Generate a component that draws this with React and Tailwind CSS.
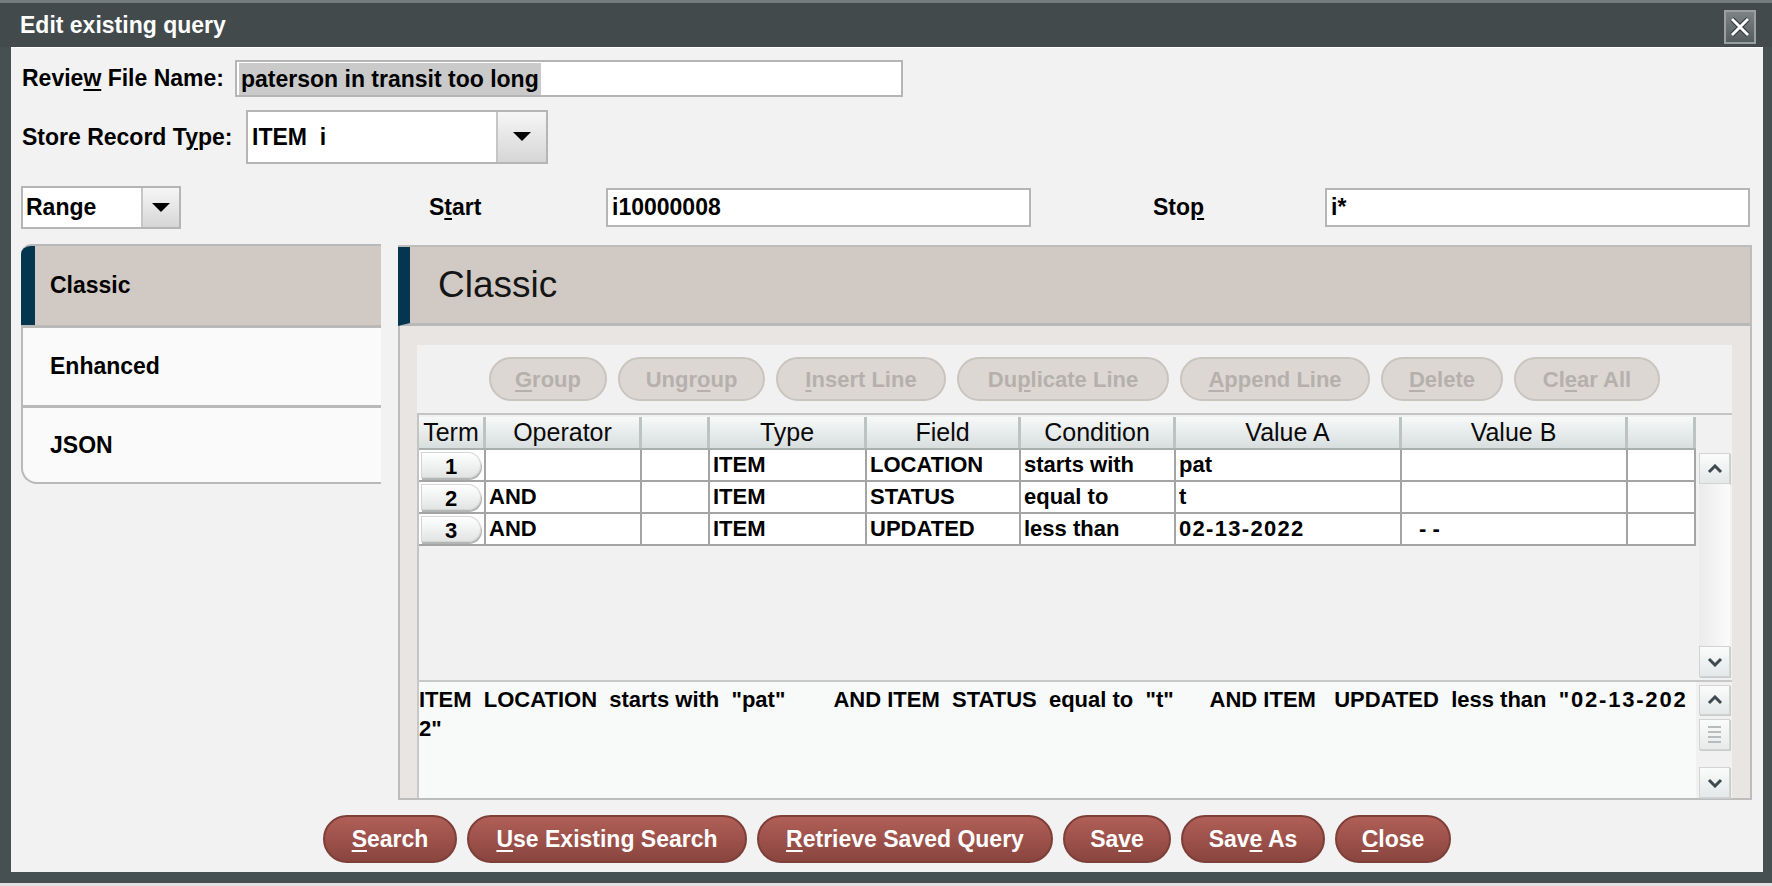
import React from "react";

const U = ({ children }) => (
  <span className="underline decoration-2 underline-offset-[3px]">{children}</span>
);

const Arrow = () => (
  <svg width="18" height="10" viewBox="0 0 18 10">
    <path d="M0 0 L18 0 L9 9 Z" fill="#000" />
  </svg>
);

const Chevron = ({ up }) => (
  <svg width="16" height="10" viewBox="0 0 16 10">
    <path
      d={up ? "M2 8 L8 2 L14 8" : "M2 2 L8 8 L14 2"}
      fill="none"
      stroke="#3e4a4f"
      strokeWidth="3"
    />
  </svg>
);

const ScrollBtn = ({ up, h = "h-[31px]" }) => (
  <div
    className={`w-[31px] ${h} border border-[#d2d4d4] bg-gradient-to-b from-[#fbfbfb] to-[#e4e8e9] flex items-center justify-center shadow-[1px_1px_0_#c8cbcc]`}
  >
    <Chevron up={up} />
  </div>
);

const cols = [
  { w: "w-[67px]", label: "Term" },
  { w: "w-[156px]", label: "Operator" },
  { w: "w-[68px]", label: "" },
  { w: "w-[157px]", label: "Type" },
  { w: "w-[154px]", label: "Field" },
  { w: "w-[155px]", label: "Condition" },
  { w: "w-[226px]", label: "Value A" },
  { w: "w-[226px]", label: "Value B" },
  { w: "w-[68px]", label: "" },
];

const rows = [
  ["1", "", "", "ITEM", "LOCATION", "starts with", "pat", "", ""],
  ["2", "AND", "", "ITEM", "STATUS", "equal to", "t", "", ""],
  ["3", "AND", "", "ITEM", "UPDATED", "less than", "02-13-2022", "- -", ""],
];

const toolbar = [
  { w: "w-[118px]", t: <span><U>G</U>roup</span> },
  { w: "w-[147px]", t: <span>Ungr<U>o</U>up</span> },
  { w: "w-[170px]", t: <span><U>I</U>nsert Line</span> },
  { w: "w-[212px]", t: <span>Du<U>p</U>licate Line</span> },
  { w: "w-[190px]", t: <span><U>A</U>ppend Line</span> },
  { w: "w-[122px]", t: <span><U>D</U>elete</span> },
  { w: "w-[146px]", t: <span>Cl<U>e</U>ar All</span> },
];

const bottomBtns = [
  { w: "w-[134px]", t: <span><U>S</U>earch</span> },
  { w: "w-[280px]", t: <span><U>U</U>se Existing Search</span> },
  { w: "w-[296px]", t: <span><U>R</U>etrieve Saved Query</span> },
  { w: "w-[108px]", t: <span>Sa<U>v</U>e</span> },
  { w: "w-[144px]", t: <span>Sav<U>e</U> As</span> },
  { w: "w-[116px]", t: <span><U>C</U>lose</span> },
];

const queryLine1 =
  'ITEM  LOCATION  starts with  "pat"        AND ITEM  STATUS  equal to  "t"      AND ITEM   UPDATED  less than  ';

export default function App() {
  return (
    <div className="w-[1772px] h-[886px] bg-[#e2e2e2] overflow-hidden font-['Liberation_Sans',Arial,sans-serif] text-black">
      <div className="h-[883px] bg-[#465052] flex flex-col">
        {/* Title bar */}
        <div className="h-[47px] shrink-0 flex items-center justify-between pl-[20px] pr-[16px] border-t-[3px] border-[#737b7d] bg-[#424a4c]">
          <span className="text-white font-bold text-[23px] leading-none">Edit existing query</span>
          <div className="w-[32px] h-[34px] mt-[3px] border-2 border-[#9aa0a1] bg-gradient-to-b from-[#7c8385] to-[#555d5f] flex items-center justify-center">
            <svg width="22" height="22" viewBox="0 0 22 22">
              <path d="M3 3 L19 19 M19 3 L3 19" stroke="#2e3436" strokeWidth="5" />
              <path d="M3 3 L19 19 M19 3 L3 19" stroke="#fff" strokeWidth="3" />
            </svg>
          </div>
        </div>

        {/* Content */}
        <div className="flex-1 ml-[11px] mr-[9px] mb-[11px] bg-[#f2f2f2] border-t border-white flex flex-col pl-[11px] pr-[11px]">
          {/* Row 1 */}
          <div className="mt-[12px] h-[37px] flex items-center">
            <div className="w-[213px] font-bold text-[23px]">
              Revie<U>w</U> File Name:
            </div>
            <div className="w-[668px] h-[37px] border-2 border-[#b5b5b5] bg-white flex items-center pl-[2px]">
              <span className="h-[32px] leading-[32px] bg-[#cacaca] font-bold text-[23px] px-[2px]">
                paterson in transit too long
              </span>
            </div>
          </div>

          {/* Row 2 */}
          <div className="mt-[13px] h-[54px] flex items-center">
            <div className="w-[224px] font-bold text-[23px]">
              Store Record T<U>y</U>pe:
            </div>
            <div className="w-[302px] h-[54px] border-2 border-[#b5b5b5] bg-white flex">
              <div className="flex-1 flex items-center pl-[4px] font-bold text-[23px] whitespace-pre">ITEM  i</div>
              <div className="w-[50px] border-l-2 border-[#c6c6c6] bg-gradient-to-b from-[#f6f6f6] to-[#d6d6d6] flex items-center justify-center">
                <Arrow />
              </div>
            </div>
          </div>

          {/* Row 3 */}
          <div className="mt-[22px] h-[43px] flex items-center">
            <div className="w-[160px] h-[43px] -ml-[1px] border-2 border-[#b5b5b5] bg-white flex">
              <div className="flex-1 flex items-center pl-[3px] font-bold text-[23px]">Range</div>
              <div className="w-[38px] border-l-2 border-[#c6c6c6] bg-gradient-to-b from-[#f6f6f6] to-[#d6d6d6] flex items-center justify-center">
                <Arrow />
              </div>
            </div>
            <div className="ml-[248px] w-[177px] font-bold text-[23px]">
              S<U>t</U>art
            </div>
            <div className="w-[425px] h-[39px] border-2 border-[#b5b5b5] bg-white flex items-center pl-[4px] font-bold text-[23px]">
              i10000008
            </div>
            <div className="ml-[122px] w-[172px] font-bold text-[23px]">
              Sto<U>p</U>
            </div>
            <div className="w-[425px] h-[39px] border-2 border-[#b5b5b5] bg-white flex items-center pl-[4px] font-bold text-[23px]">
              i*
            </div>
          </div>

          {/* Tabs + panel */}
          <div className="mt-[15px] flex items-start gap-[17px]">
            {/* Left tab list */}
            <div className="w-[360px] h-[240px] -ml-[1px] border-t-2 border-[#b9b9b9] rounded-tl-[10px] overflow-hidden flex flex-col">
              <div className="h-[79px] bg-[#d1c9c3] border-l-[14px] border-[#04364f] flex items-center pl-[15px] font-bold text-[23px]">
                Classic
              </div>
              <div className="h-[3px] bg-[#b9b9b9]" />
              <div className="h-[77px] bg-[#fafafa] border-l-2 border-[#b9b9b9] flex items-center pl-[27px] font-bold text-[23px]">
                Enhanced
              </div>
              <div className="h-[3px] bg-[#b9b9b9]" />
              <div className="h-[76px] bg-[#fafafa] border-l-2 border-b-2 border-[#b9b9b9] rounded-bl-[16px] flex items-center pl-[27px] font-bold text-[23px]">
                JSON
              </div>
            </div>

            {/* Right panel */}
            <div className="w-[1354px] h-[555px] mt-[1px] border-t-2 border-r-2 border-b-2 border-[#bdbdbd] bg-[#e8e5e2] flex flex-col">
              <div className="h-[79px] shrink-0 bg-[#d1c9c3] border-l-[12px] border-b-[3px] border-l-[#04364f] border-b-[#b8b8b8] flex items-center pl-[28px] text-[37px] text-[#151515]">
                Classic
              </div>
              <div className="flex-1 border-l-2 border-[#bdbdbd] pl-[17px] pr-[18px] pt-[19px] flex">
                <div className="flex-1 bg-[#f1f1f1] flex flex-col">
                  {/* Toolbar */}
                  <div className="h-[68px] shrink-0 flex items-center justify-center gap-[11px]">
                    {toolbar.map((b, i) => (
                      <div
                        key={i}
                        className={`${b.w} h-[44px] rounded-full border-2 border-[#cac4bf] bg-[#dcd7d3] text-[#b6b0ac] font-bold text-[22px] flex items-center justify-center whitespace-pre`}
                      >
                        {b.t}
                      </div>
                    ))}
                  </div>

                  {/* Table pane */}
                  <div className="h-[267px] shrink-0 border-t-2 border-l-2 border-[#c4c4c4] pt-[2px] flex">
                    <div className="w-[1277px] flex flex-col">
                      <div className="h-[33px] flex border-b-2 border-[#a9aeae]">
                        {cols.map((c, i) => (
                          <div
                            key={i}
                            className={`${c.w} h-full border-r-[3px] border-[#bcc3c3] bg-gradient-to-b from-[#f8f9f9] to-[#d8dede] flex items-center justify-center text-[25px] leading-none text-[#0a0a0a]`}
                          >
                            {c.label}
                          </div>
                        ))}
                      </div>
                      {rows.map((r, ri) => (
                        <div key={ri} className="h-[32px] flex bg-white">
                          {cols.map((c, ci) => (
                            <div
                              key={ci}
                              className={`${c.w} h-full border-r-2 border-b-2 border-[#a4a4a4] flex items-center font-bold text-[22px] leading-none whitespace-pre ${
                                ci === 7 ? "pl-[17px]" : "pl-[3px]"
                              }`}
                            >
                              {ci === 0 ? (
                                <div className="w-[60px] h-[26px] -ml-[1px] rounded-l-[6px] rounded-r-full bg-gradient-to-b from-[#ffffff] to-[#e2e4e4] shadow-[1px_2px_0_#b4b6b6] border border-[#d4d6d6] flex items-center justify-center pt-[4px]">
                                  {r[0]}
                                </div>
                              ) : ci === 6 && ri === 2 ? (
                                <span className="tracking-[1.3px]">{r[ci]}</span>
                              ) : (
                                r[ci]
                              )}
                            </div>
                          ))}
                        </div>
                      ))}
                    </div>
                    <div className="w-[36px] pl-[3px] flex flex-col pt-[36px] pb-[3px]">
                      <ScrollBtn up />
                      <div className="flex-1 w-[31px] bg-gradient-to-r from-[#ebebeb] to-[#fbfbfb]" />
                      <ScrollBtn />
                    </div>
                  </div>

                  {/* Text area pane */}
                  <div className="flex-1 border-t-2 border-l-2 border-[#c8c8c8] flex bg-[#f8f9f9]">
                    <div className="w-[1277px] pt-[3px] font-bold text-[22px] leading-[29px] whitespace-pre overflow-hidden">
                      <div>
                        {queryLine1}
                        <span className="tracking-[1.8px]">"02-13-202</span>
                      </div>
                      <div>{'2"'}</div>
                    </div>
                    <div className="w-[36px] pl-[3px] flex flex-col pt-[3px] bg-[#f1f1f1]">
                      <ScrollBtn up h="h-[30px]" />
                      <div className="mt-[4px] w-[31px] h-[31px] border border-[#d2d4d4] bg-gradient-to-b from-[#fbfbfb] to-[#e8eaea] flex flex-col items-center justify-center gap-[3px] shadow-[1px_1px_0_#c8cbcc]">
                        <div className="w-[13px] h-[2px] bg-[#b8bcbd]" />
                        <div className="w-[13px] h-[2px] bg-[#b8bcbd]" />
                        <div className="w-[13px] h-[2px] bg-[#b8bcbd]" />
                        <div className="w-[13px] h-[2px] bg-[#b8bcbd]" />
                      </div>
                      <div className="flex-1" />
                      <ScrollBtn />
                    </div>
                  </div>
                </div>
              </div>
            </div>
          </div>

          {/* Bottom buttons */}
          <div className="mt-[15px] h-[48px] flex justify-center gap-[10px]">
            {bottomBtns.map((b, i) => (
              <div
                key={i}
                className={`${b.w} h-[48px] rounded-full border-2 border-[#7e3f39] bg-gradient-to-b from-[#b05f57] to-[#8a453f] text-white font-bold text-[23px] flex items-center justify-center whitespace-pre`}
              >
                {b.t}
              </div>
            ))}
          </div>
        </div>
      </div>
    </div>
  );
}
